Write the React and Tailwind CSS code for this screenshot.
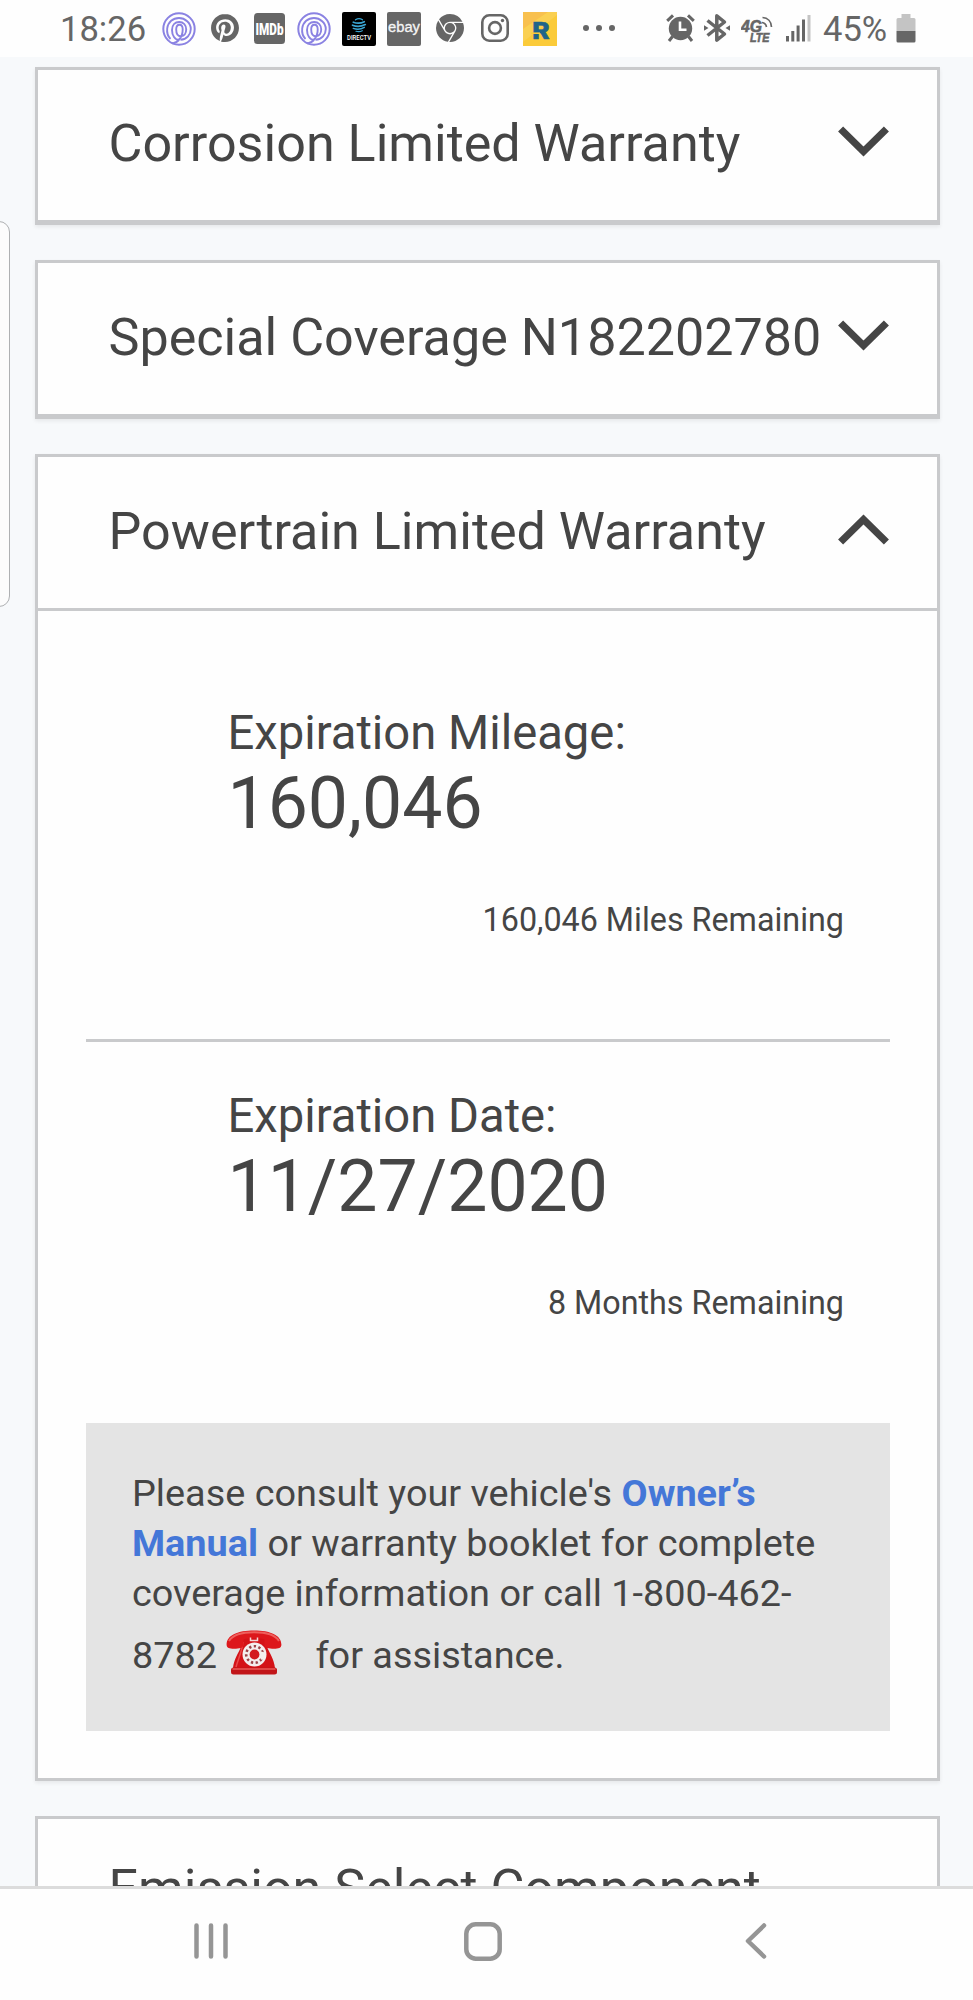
import { SiPinterest, SiGooglechrome } from "react-icons/si";

const closedCards = [
  { title: "Corrosion Limited Warranty", size: "h-[158px] mb-[35px]" },
  { title: "Special Coverage N182202780", size: "h-[159px] mb-[35px]" },
];

function SpiralIcon({ className }) {
  return (
    <svg className={className} width="34" height="34" viewBox="0 0 34 34" fill="none" stroke="#8a82e2">
      <circle cx="17" cy="17" r="15.7" strokeWidth="2" />
      <path
        d="M10 31c2.500.4 5-.8 7-3M8.500 27C5.500 24 4.800 20 5.200 16.500 6 10 11 6 17 6s11.800 4.800 11.800 11c0 5.500-4 10.300-10.300 10.800M17 28c-4 0-7-4.500-7-10 0-5 3-8 7.200-8s7 3.200 7 7.600c0 4-2.200 6.600-5.200 6.600-3.200 0-4.800-3-4.800-6.800 0-3 1.200-4.700 3.300-4.700s3.200 2 3.200 4.700c0 4.500-1.500 8-4 10.500"
        strokeWidth="1.900"
      />
    </svg>
  );
}

function ImdbIcon({ className }) {
  return (
    <svg className={className} width="31" height="31" viewBox="0 0 31 31">
      <rect width="31" height="31" rx="3.500" fill="#666" />
      <text transform="translate(1.500 21.700) scale(.72 1)" textLength="39" lengthAdjust="spacingAndGlyphs" fontSize="16.500" fontWeight="900" fill="#fff" className="font-[Roboto,sans-serif]">
        IMDb
      </text>
    </svg>
  );
}

function DirectvIcon({ className }) {
  return (
    <svg className={className} width="34" height="34" viewBox="0 0 34 34">
      <rect width="34" height="34" rx="2" fill="#000" />
      <g fill="none" stroke="#3aa5d2" strokeLinecap="round">
        <path d="M13.500 7.800c2-1.300 5-1.300 7 0" strokeWidth="1.300" />
        <path d="M11.300 10.200c3.500 1.300 8 1 11-.5" strokeWidth="1.600" />
        <path d="M10.500 13.200c4 1.700 9 1.300 12.800-.6" strokeWidth="1.700" />
        <path d="M11.300 16.400c3.500 1.200 8 .8 11-1" strokeWidth="1.500" />
        <path d="M14 19.300c2 .6 4.500.4 6.300-.6" strokeWidth="1.200" />
      </g>
      <text x="5" y="27.800" textLength="24" lengthAdjust="spacingAndGlyphs" fontSize="7" fontWeight="500" fill="#fff" className="font-[Roboto,sans-serif]">
        DIRECTV
      </text>
    </svg>
  );
}

function EbayIcon({ className }) {
  return (
    <svg className={className} width="34" height="34" viewBox="0 0 34 34">
      <rect width="34" height="34" rx="2" fill="#666" />
      <text x="1" y="20" textLength="32" lengthAdjust="spacingAndGlyphs" fontSize="14" fill="#f4f4f4" stroke="#f4f4f4" strokeWidth=".3" className="font-['Liberation_Sans',sans-serif]">
        ebay
      </text>
    </svg>
  );
}

function InstagramIcon({ className }) {
  return (
    <svg className={className} width="28" height="28" viewBox="0 0 28 28" fill="none" stroke="#666">
      <rect x="1.300" y="1.300" width="25.400" height="25.400" rx="7" strokeWidth="2.600" />
      <circle cx="14" cy="14" r="5.900" strokeWidth="2.600" />
      <circle cx="21.500" cy="6.500" r="1.700" fill="#666" stroke="none" />
    </svg>
  );
}

function RewardsIcon({ className }) {
  return (
    <svg className={className} width="34" height="34" viewBox="0 0 34 34">
      <rect width="34" height="34" fill="#fbcb3a" />
      <path d="M0 0h25L0 17z" fill="#f8c04e" />
      <path d="M0 17 25 0h9v3L0 30z" fill="#fad052" />
      <text x="9.200" y="27" textLength="17.500" lengthAdjust="spacingAndGlyphs" fontSize="24.500" fontWeight="900" fill="#1f6489" stroke="#1f6489" strokeWidth=".6" className="font-[Roboto,sans-serif]">
        R
      </text>
      <path d="M8 21.200h9" stroke="#fbcb3a" strokeWidth="1.600" />
    </svg>
  );
}

function AlarmIcon({ className }) {
  return (
    <svg className={className} width="29" height="28" viewBox="0 0 29 28" fill="none" stroke="#666">
      <circle cx="14.500" cy="14.500" r="11.700" fill="#666" stroke="none" />
      <path d="M1.200 6.800 7 1.300M27.800 6.800 22 1.300" strokeWidth="3" />
      <path d="M6.500 22.500 3 27M22.500 22.500 26 27" strokeWidth="3" />
      <path d="M14 7.500v8.300h6.500" stroke="#fff" strokeWidth="2.600" />
    </svg>
  );
}

function BluetoothIcon({ className }) {
  return (
    <svg className={className} width="26" height="30" viewBox="0 0 26 30" fill="none" stroke="#666">
      <path d="M3.500 7.500 20.500 21l-7.700 6.200V2.800L20.500 9 3.500 22.500" strokeWidth="3.500" strokeLinejoin="round" />
      <path d="M0 12.300 4.500 15 0 17.700zM26 12.300 21.500 15l4.500 2.700z" fill="#666" stroke="none" />
    </svg>
  );
}

function LteIcon({ className }) {
  return (
    <svg className={className} width="32" height="27" viewBox="0 0 32 27">
      <g fill="#666" fontWeight="700" fontStyle="italic" className="font-['Liberation_Sans',sans-serif]" stroke="#666" strokeWidth=".6">
        <text x="0" y="16.200" fontSize="16" textLength="21" lengthAdjust="spacingAndGlyphs">4G</text>
        <text x="9" y="26.200" fontSize="12.500" textLength="19.500" lengthAdjust="spacingAndGlyphs">LTE</text>
      </g>
      <path d="M21 6.500c2.600.3 4 1.700 4.500 4.500M21.500 1.500c5.200.3 8.800 3.800 9 9.500" fill="none" stroke="#666" strokeWidth="1.700" />
    </svg>
  );
}

function SignalIcon({ className }) {
  return (
    <svg className={className} width="25" height="28" viewBox="0 0 25 28" fill="#666">
      <rect x="0" y="22" width="3" height="5.500" />
      <rect x="5.300" y="17" width="3" height="10.500" />
      <rect x="10.600" y="11.500" width="3" height="16" />
      <rect x="16" y="5.500" width="3" height="22" />
      <rect x="21.500" y="1" width="3" height="26.500" fill="#c4c4c4" />
    </svg>
  );
}

function BatteryIcon({ className }) {
  return (
    <svg className={className} width="20" height="30" viewBox="0 0 20 30">
      <path d="M5.500 1h9v4H18a1.500 1.500 0 0 1 1.500 1.500V18H.5V6.500A1.500 1.500 0 0 1 2 5h3.500z" fill="#c4c4c4" />
      <path d="M.5 18h19v10A1.500 1.500 0 0 1 18 29.500H2A1.500 1.500 0 0 1 .5 28z" fill="#666" />
    </svg>
  );
}

function Chevron({ up }) {
  return (
    <svg
      className={up ? "rotate-180 shrink-0" : "shrink-0"}
      width="51"
      height="31"
      viewBox="0 0 51 31"
      fill="none"
      stroke="#454545"
      strokeWidth="7.200"
    >
      <path d="M2.600 3 25.500 25.500 48.400 3" />
    </svg>
  );
}

function PhoneEmoji() {
  return (
    <svg width="56" height="45" viewBox="0 0 56 45">
      <path d="M17 7h22v6l2 4c3 7 7 12 8 21H7c1-9 5-14 8-21l2-4z" fill="#d41217" />
      <path d="M17 12c-1 10-5 17-7 25" stroke="#e9494a" strokeWidth="1.500" fill="none" />
      <rect x="5" y="37.500" width="46" height="7" rx="2.500" fill="#c11519" />
      <path d="M6.500 39h43" stroke="#ec5a57" strokeWidth="1.500" />
      <path
        d="M.6 14.500C.6 5 12 .4 28 .4S55.400 5 55.400 14.500c0 3.500-3 4.300-7.400 4.300-5 0-9.500-.8-9.500-4V9.500c-5-2-16-2-21 0v5.300c0 3.200-4.500 4-9.500 4-4.400 0-7.400-.8-7.400-4.300z"
        fill="#dd171b"
      />
      <path d="M3 11C7 4.500 16 2.300 28 2.300S49 4.500 53 11" fill="none" stroke="#ee5f5c" strokeWidth="2" />
      <path d="M24.500 7.500v3h7v-3" fill="none" stroke="#f3d6d6" strokeWidth="1.500" />
      <circle cx="28.500" cy="24.500" r="12" fill="#f4eeee" />
      <circle cx="28.500" cy="24.500" r="8.300" fill="none" stroke="#9c4448" strokeWidth="2.600" strokeDasharray="2.300 2.500" pathLength="52.200" />
      <path d="M33 20.500 39.500 23v3.500L35 30z" fill="#f4eeee" />
      <circle cx="28.500" cy="24.500" r="4.900" fill="#d3191e" />
    </svg>
  );
}

function Coverage({ label, value, remaining }) {
  return (
    <div className="pl-[141.500px] pr-[46px]">
      <p className="text-[47.200px] leading-[54px]">{label}</p>
      <p className="text-[71.500px] leading-[88px]">{value}</p>
      <p className="mt-[52px] text-right text-[32.300px] leading-[40px]">{remaining}</p>
    </div>
  );
}

export default function App() {
  return (
    <div className="relative flex h-[2000px] w-[973px] flex-col overflow-hidden bg-[#f7f9fb] font-[Roboto,sans-serif] text-[#454545]">
      {/* Status bar */}
      <header className="flex h-[57px] shrink-0 items-start bg-[#fefefe] pl-[60px] text-[#666]">
        <span className="mt-[9px] w-[102px] text-[34.600px] leading-[40px]">18:26</span>
        <SpiralIcon className="mt-[12px]" />
        <SiPinterest className="mt-[14px] ml-[14.500px] size-[28px]" />
        <ImdbIcon className="mt-[13px] ml-[15.500px]" />
        <SpiralIcon className="mt-[12px] ml-[12px]" />
        <DirectvIcon className="mt-[12px] ml-[11px]" />
        <EbayIcon className="mt-[12px] ml-[11px]" />
        <SiGooglechrome className="mt-[14px] ml-[15px] size-[28px]" />
        <InstagramIcon className="mt-[14px] ml-[17px]" />
        <RewardsIcon className="mt-[12px] ml-[14px]" />
        <span className="mt-[25px] ml-[25.500px] flex gap-[7px]">
          <i className="size-[6px] rounded-full bg-[#666]" />
          <i className="size-[6px] rounded-full bg-[#666]" />
          <i className="size-[6px] rounded-full bg-[#666]" />
        </span>
        <AlarmIcon className="mt-[14px] ml-[51.500px]" />
        <BluetoothIcon className="mt-[13px] ml-[9px]" />
        <LteIcon className="mt-[16px] ml-[11px]" />
        <SignalIcon className="mt-[14px] ml-[13px]" />
        <span className="mt-[9px] ml-[12px] w-[73px] text-[34.600px] leading-[40px]">45%</span>
        <BatteryIcon className="mt-[13px]" />
      </header>

      {/* Edge panel handle */}
      <div className="absolute top-[221px] -left-[20px] h-[386px] w-[30px] rounded-[11px] border border-[#aeb0b2] bg-[#fcfcfc]" />

      <main className="min-h-0 flex-1 overflow-hidden pt-[10px] pr-[33px] pl-[35px]">
        {closedCards.map((card) => (
          <section
            key={card.title}
            className={`flex items-center justify-between border-[3px] border-b-[5px] border-[#c9cacc] bg-[#fefefe] pr-[48px] pl-[70.500px] shadow-[0_2px_4px_rgba(0,0,0,0.07)] ${card.size}`}
          >
            <h2 className="-mt-[2px] text-[52.100px] leading-[60px] whitespace-nowrap">{card.title}</h2>
            <span className="-mt-[7px] flex">
              <Chevron />
            </span>
          </section>
        ))}

        <section className="mb-[35px] h-[1327px] border-[3px] border-[#c9cacc] bg-[#fefefe] shadow-[0_2px_4px_rgba(0,0,0,0.07)]">
          <div className="flex h-[154px] items-center justify-between border-b-[3px] border-[#c9cacc] pr-[48px] pl-[70.500px]">
            <h2 className="-mt-[2px] text-[52.100px] leading-[60px] whitespace-nowrap">Powertrain Limited Warranty</h2>
            <span className="-mt-[6px] flex">
              <Chevron up />
            </span>
          </div>

          <div className="pt-[95px] pr-[47px] pl-[48px]">
            <Coverage label="Expiration Mileage:" value="160,046" remaining="160,046 Miles Remaining" />
            <hr className="mt-[99px] mb-[47px] border-t-[3px] border-[#c9cacc]" />
            <Coverage label="Expiration Date:" value="11/27/2020" remaining="8 Months Remaining" />

            <div className="mt-[100px] h-[308px] bg-[#e4e4e4] px-[46px] pt-[44.500px] text-[37.850px] leading-[50.400px]">
              Please consult your vehicle's{" "}
              <a className="font-bold text-[#4477d8]">Owner’s Manual</a> or warranty booklet for complete coverage
              information or call 1-800-462-8782
              <span className="mr-[24px] ml-[9px] inline-block h-[67px] pt-[11px] align-[-18.500px]">
                <PhoneEmoji />
              </span>{" "}
              for assistance.
            </div>
          </div>
        </section>

        <section className="h-[220px] border-[3px] border-[#c9cacc] bg-[#fefefe] pt-[40px] pl-[70.500px]">
          <h2 className="text-[52.100px] leading-[60px]">Emission Select Component</h2>
        </section>
      </main>

      {/* Navigation bar */}
      <nav className="flex h-[114px] shrink-0 items-start border-t-[3px] border-[#dcdcdc] bg-[#fefefe] pt-[33px] pl-[193px]">
        <svg width="36" height="38" viewBox="0 0 36 38" stroke="#959595" strokeWidth="4.500" strokeLinecap="round">
          <path d="M3.500 3.500v31M18 3.500v31M32.500 3.500v31" />
        </svg>
        <svg className="ml-[235px]" width="38" height="40" viewBox="0 0 38 40" fill="none" stroke="#959595" strokeWidth="4.500">
          <rect x="2.300" y="2.300" width="33.400" height="34.400" rx="9.500" />
        </svg>
        <svg className="ml-[242px]" width="24" height="38" viewBox="0 0 24 38" fill="none" stroke="#959595" strokeWidth="4.500" strokeLinecap="round" strokeLinejoin="round">
          <path d="M20 3.500 4 19l16 15.500" />
        </svg>
      </nav>
    </div>
  );
}
